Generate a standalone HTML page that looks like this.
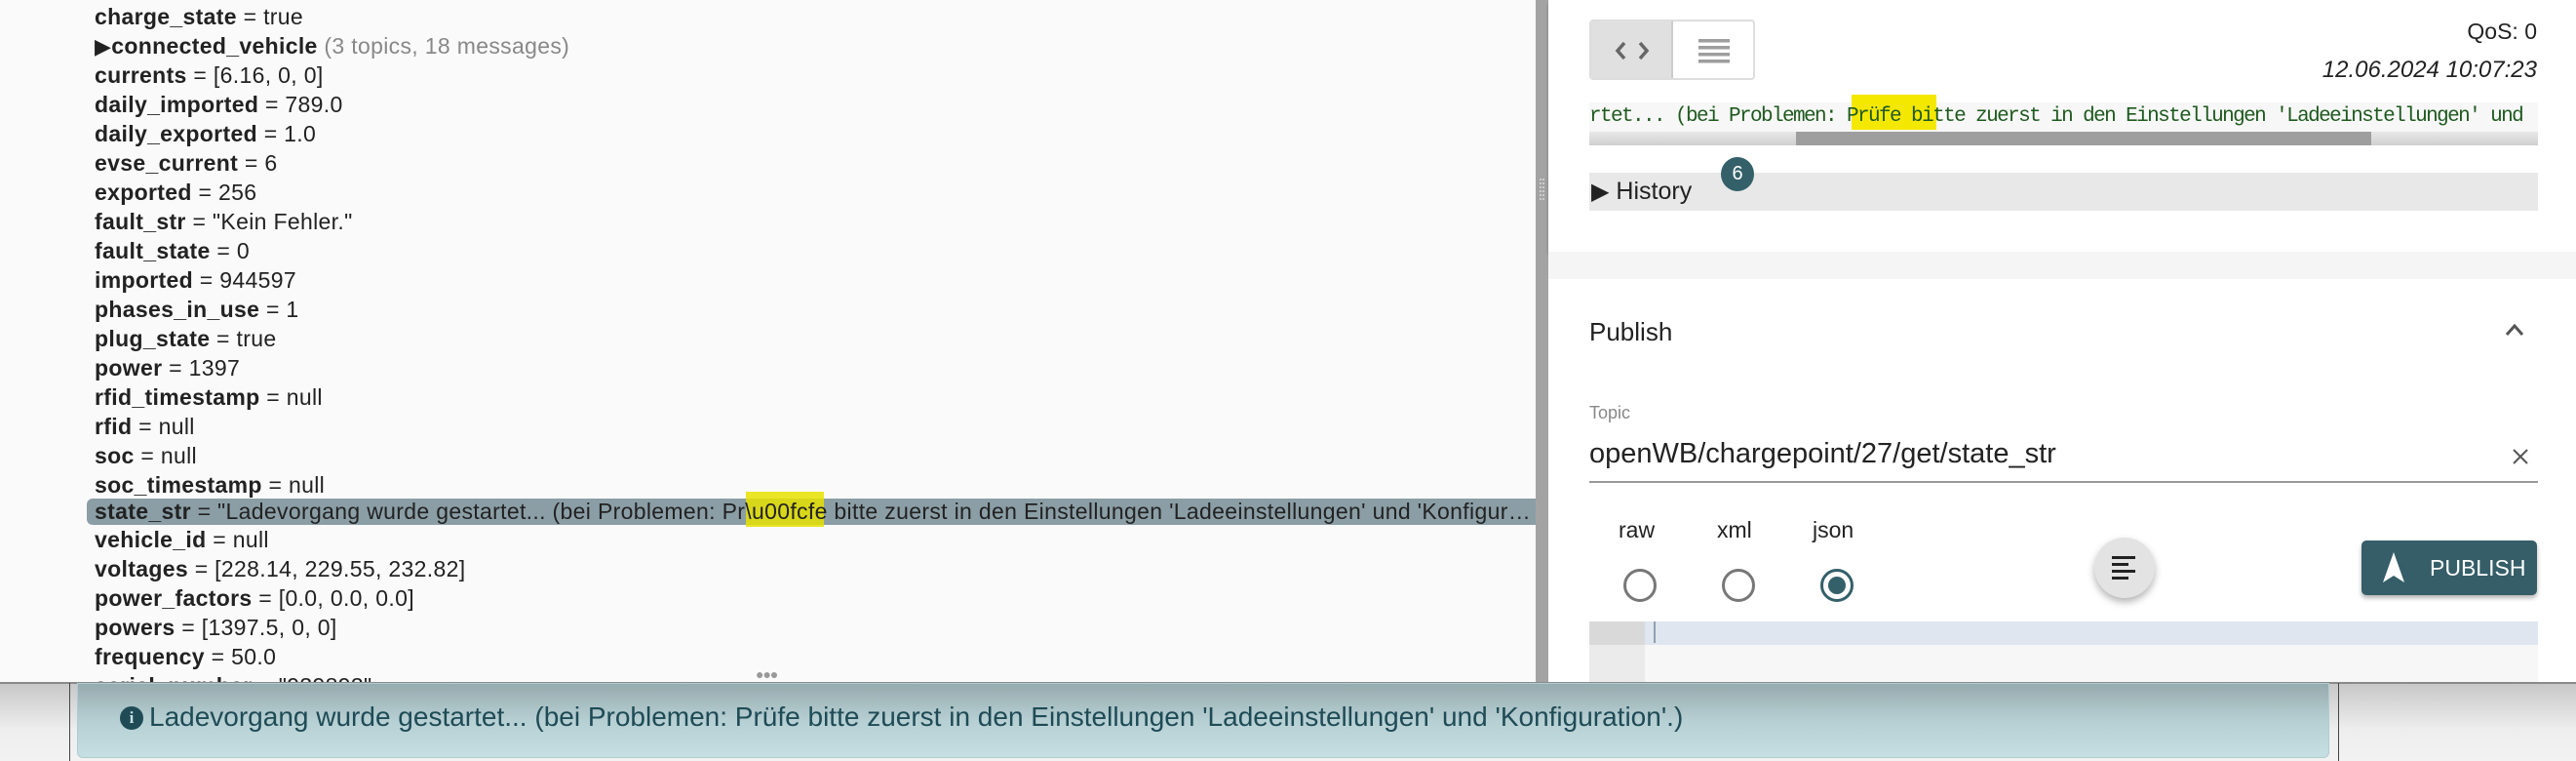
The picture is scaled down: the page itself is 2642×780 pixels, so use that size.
<!DOCTYPE html>
<html><head><meta charset="utf-8"><style>
*{margin:0;padding:0;box-sizing:border-box}
body{width:2642px;height:780px;overflow:hidden;position:relative;background:#fafafa;font-family:"Liberation Sans",Arial,sans-serif;color:#222}
.abs{position:absolute}
#left{left:0;top:0;width:1575px;height:700px;background:#fafafa;overflow:hidden}
.row{position:absolute;left:97px;font-size:23px;letter-spacing:0.33px;line-height:30px;white-space:nowrap;color:#222}
.row b{font-weight:bold}
#sb{left:1575px;top:0;width:13px;height:700px;background:#a3a3a3}
#right{left:1588px;top:0;width:1054px;height:700px;background:#fff}
.mono{font-family:"Liberation Mono",monospace}
</style></head><body>
<div id="left" class="abs">
<div class="row" style="top:-28px"><b>charge_mode</b> = null</div>
<div class="row" style="top:2px"><b>charge_state</b> = true</div>
<div class="row" style="top:32px"><span style="font-size:22px">&#9654;</span><b>connected_vehicle</b> <span style="color:#888">(3 topics, 18 messages)</span></div>
<div class="row" style="top:62px"><b>currents</b> = [6.16, 0, 0]</div>
<div class="row" style="top:92px"><b>daily_imported</b> = 789.0</div>
<div class="row" style="top:122px"><b>daily_exported</b> = 1.0</div>
<div class="row" style="top:152px"><b>evse_current</b> = 6</div>
<div class="row" style="top:182px"><b>exported</b> = 256</div>
<div class="row" style="top:212px"><b>fault_str</b> = "Kein Fehler."</div>
<div class="row" style="top:242px"><b>fault_state</b> = 0</div>
<div class="row" style="top:272px"><b>imported</b> = 944597</div>
<div class="row" style="top:302px"><b>phases_in_use</b> = 1</div>
<div class="row" style="top:332px"><b>plug_state</b> = true</div>
<div class="row" style="top:362px"><b>power</b> = 1397</div>
<div class="row" style="top:392px"><b>rfid_timestamp</b> = null</div>
<div class="row" style="top:422px"><b>rfid</b> = null</div>
<div class="row" style="top:452px"><b>soc</b> = null</div>
<div class="row" style="top:482px"><b>soc_timestamp</b> = null</div>
<div class="abs" style="left:89px;top:511px;width:1490px;height:27px;background:#8b9ea6;border-radius:6px 0 0 6px"></div>
<div class="abs" style="left:765px;top:504px;width:80px;height:36px;background:#e6e000;opacity:.85"></div>
<div class="row" style="top:509px;width:1475px;overflow:hidden;text-overflow:ellipsis"><b>state_str</b> = "Ladevorgang wurde gestartet... (bei Problemen: Pr\u00fcfe bitte zuerst in den Einstellungen 'Ladeeinstellungen' und 'Konfiguration'.)"</div>
<div class="row" style="top:538px"><b>vehicle_id</b> = null</div>
<div class="row" style="top:568px"><b>voltages</b> = [228.14, 229.55, 232.82]</div>
<div class="row" style="top:598px"><b>power_factors</b> = [0.0, 0.0, 0.0]</div>
<div class="row" style="top:628px"><b>powers</b> = [1397.5, 0, 0]</div>
<div class="row" style="top:658px"><b>frequency</b> = 50.0</div>
<div class="row" style="top:688px"><b>serial_number</b> = "939893"</div>
<div class="abs" style="left:775px;top:683px;font-size:14px;color:#999;letter-spacing:-1px">&#9679;&#9679;&#9679;</div>
</div>
<div id="sb" class="abs"></div>
<div class="abs" style="left:1579px;top:183px;width:5px;height:22px;border-left:2px dotted #ccc;border-right:2px dotted #ccc"></div>
<div id="right" class="abs">
 <div class="abs" style="left:0;top:0;width:1054px;height:258px;background:#fff;box-shadow:0 3px 3px rgba(0,0,0,.25)"></div>
 <div class="abs" style="left:0;top:258px;width:1054px;height:28px;background:#f5f5f5"></div>
 <div class="abs" style="left:42px;top:20px;width:170px;height:62px;border:2px solid #ddd;border-radius:4px;background:#fff;overflow:hidden">
  <div class="abs" style="left:0;top:0;width:84px;height:58px;background:#e0e0e0;border-right:2px solid #ccc"></div>
  <svg class="abs" style="left:24px;top:20px" width="36" height="20" viewBox="0 0 36 20"><path d="M10 2 L3 10 L10 18 M26 2 L33 10 L26 18" stroke="#666" stroke-width="3.5" fill="none"/></svg>
  <svg class="abs" style="left:110px;top:18px" width="32" height="26"><g fill="#9e9e9e"><rect y="0" width="32" height="3.5"/><rect y="7" width="32" height="3.5"/><rect y="14" width="32" height="3.5"/><rect y="21" width="32" height="3.5"/></g></svg>
 </div>
 <div class="abs" style="right:40px;top:19px;font-size:23px;color:#222">QoS: 0</div>
 <div class="abs" style="right:40px;top:58px;font-size:24px;font-style:italic;color:#222">12.06.2024 10:07:23</div>
 <div class="abs" style="left:42px;top:105px;width:973px;height:30px;background:#f7f7f7"></div>
 <div class="abs" style="left:311px;top:97px;width:87px;height:36px;background:#f5e800"></div>
 <div class="abs mono" style="left:42px;top:105px;width:973px;height:30px;overflow:hidden;white-space:nowrap;font-size:21px;letter-spacing:-1.6px;line-height:30px;color:#1e5a1e">rtet... (bei Problemen: Prüfe bitte zuerst in den Einstellungen 'Ladeeinstellungen' und</div>
 <div class="abs" style="left:42px;top:135px;width:973px;height:14px;background:linear-gradient(#e8e8e8,#d0d0d0)"></div>
 <div class="abs" style="left:254px;top:135px;width:590px;height:14px;background:#9e9e9e"></div>
 <div class="abs" style="left:42px;top:177px;width:973px;height:39px;background:#e8e8e8"></div>
 <div class="abs" style="left:44px;top:182px;font-size:25px;color:#222"><span style="font-size:24px">&#9654;</span> History</div>
 <div class="abs" style="left:177px;top:161px;width:34px;height:35px;border-radius:50%;background:#34606a;color:#fff;font-size:20px;text-align:center;line-height:35px">6</div>
 <div class="abs" style="left:42px;top:325px;font-size:26px;color:#222">Publish</div>
 <svg class="abs" style="left:980px;top:330px" width="22" height="16"><path d="M3 13 L11 4 L19 13" stroke="#555" stroke-width="3" fill="none"/></svg>
 <div class="abs" style="left:42px;top:413px;font-size:18px;color:#888">Topic</div>
 <div class="abs" style="left:42px;top:449px;font-size:29px;color:#222">openWB/chargepoint/27/get/state_str</div>
 <svg class="abs" style="left:988px;top:459px" width="18" height="18"><path d="M2 2 L16 16 M16 2 L2 16" stroke="#555" stroke-width="2"/></svg>
 <div class="abs" style="left:42px;top:493px;width:973px;height:2px;background:#9a9a9a"></div>
 <div class="abs" style="left:72px;top:530px;font-size:23px;color:#222">raw</div>
 <div class="abs" style="left:173px;top:530px;font-size:23px;color:#222">xml</div>
 <div class="abs" style="left:271px;top:530px;font-size:23px;color:#222">json</div>
 <div class="abs" style="left:77px;top:583px;width:34px;height:34px;border:3px solid #777;border-radius:50%"></div>
 <div class="abs" style="left:178px;top:583px;width:34px;height:34px;border:3px solid #777;border-radius:50%"></div>
 <div class="abs" style="left:279px;top:583px;width:34px;height:34px;border:3px solid #34606a;border-radius:50%"><div style="margin:5px;width:18px;height:18px;border-radius:50%;background:#34606a"></div></div>
 <div class="abs" style="left:560px;top:551px;width:62px;height:62px;border-radius:50%;background:#e3e3e3;box-shadow:0 4px 8px rgba(0,0,0,.3)">
  <svg class="abs" style="left:18px;top:18px" width="26" height="26"><g fill="#222"><rect y="1" width="24" height="3"/><rect y="8" width="17" height="3"/><rect y="15" width="24" height="3"/><rect y="22" width="17" height="3"/></g></svg>
 </div>
 <div class="abs" style="left:834px;top:554px;width:180px;height:56px;border-radius:5px;background:#355e68;box-shadow:0 3px 5px rgba(0,0,0,.3);color:#fff;font-size:23px;line-height:56px">
  <svg class="abs" style="left:20px;top:11px" width="26" height="34"><path d="M13 1 L24 32 L13 25 L2 32 Z" fill="#fff"/></svg>
  <span style="position:absolute;left:70px">PUBLISH</span>
 </div>
 <div class="abs" style="left:42px;top:637px;width:973px;height:63px;background:#f7f7f7"></div>
 <div class="abs" style="left:42px;top:637px;width:57px;height:63px;background:#ebebeb"></div>
 <div class="abs" style="left:99px;top:637px;width:916px;height:24px;background:#dfe6ef"></div>
 <div class="abs" style="left:42px;top:637px;width:57px;height:24px;background:#d9d9d9"></div>
 <div class="abs" style="left:108px;top:637px;width:2px;height:22px;background:#8fa0b0"></div>
</div>
<div class="abs" style="left:0;top:699px;width:2642px;height:81px;background:linear-gradient(#c8c8c8,#eeeeee 60%,#f2f2f2);border-top:2px solid #8a8a8a"></div>
<div class="abs" style="left:71px;top:700px;width:1px;height:80px;background:#444"></div>
<div class="abs" style="left:2398px;top:700px;width:1px;height:80px;background:#444"></div>
<div class="abs" style="left:79px;top:700px;width:2310px;height:77px;border-radius:0 0 6px 6px;background:linear-gradient(#97abae,#b6cfd3 50%,#c6dfe3);border:1px solid #b0ccd2"></div>
<div class="abs" style="left:123px;top:724px;width:24px;height:24px;border-radius:50%;background:#1e4b56;color:#c6dfe3;font-size:17px;font-weight:bold;text-align:center;line-height:24px;font-family:'Liberation Serif',serif">i</div>
<div class="abs" style="left:153px;top:719px;font-size:28px;color:#1e4b56;white-space:nowrap">Ladevorgang wurde gestartet... (bei Problemen: Prüfe bitte zuerst in den Einstellungen 'Ladeeinstellungen' und 'Konfiguration'.)</div>
</body></html>
